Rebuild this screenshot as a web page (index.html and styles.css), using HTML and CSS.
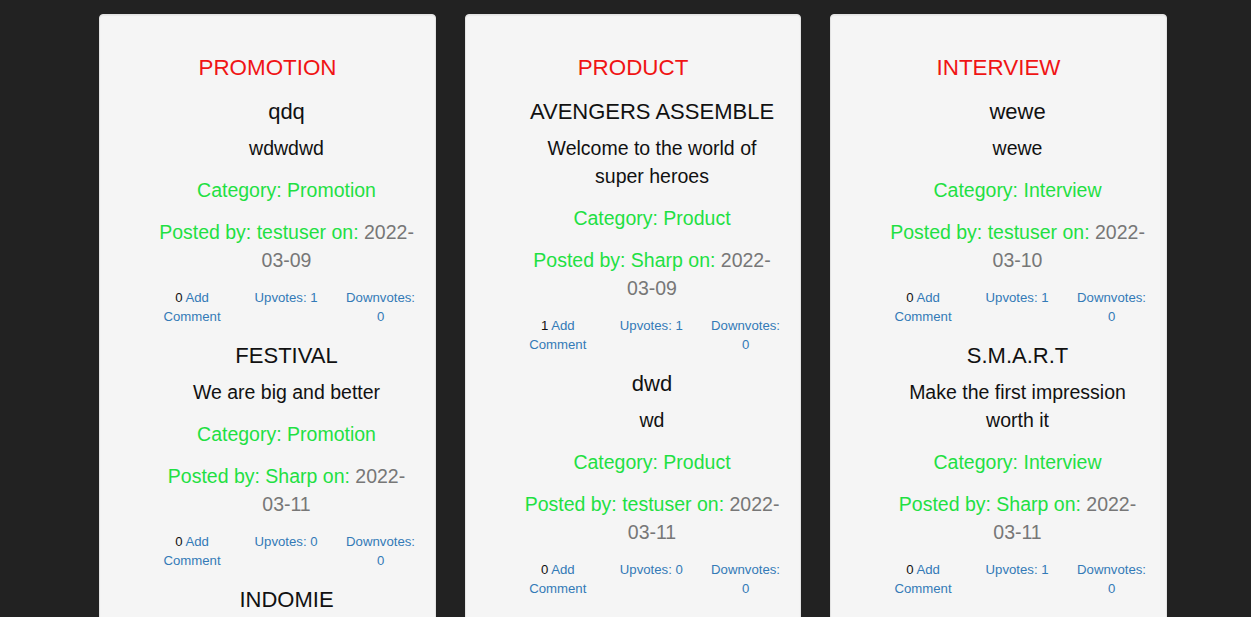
FILE: index.html
```html
<!DOCTYPE html>
<html lang="en">
<head>
<meta charset="utf-8">
<title>Posts</title>
<link rel="stylesheet" href="styles.css">
</head>
<body>
<main class="board">
  <section class="well">
    <h3 class="cat-head">PROMOTION</h3>
    <ul class="posts">
      <li class="post">
        <h4 class="post-title">qdq</h4>
        <p class="post-desc">wdwdwd</p>
        <p class="post-cat">Category: Promotion</p>
        <p class="post-meta">Posted by: testuser on: <span class="date">2022-03-09</span></p>
        <div class="stats">
          <div class="stat"><span class="count">0</span> <a href="#">Add Comment</a></div>
          <div class="stat"><a href="#">Upvotes: 1</a></div>
          <div class="stat"><a href="#">Downvotes: 0</a></div>
        </div>
      </li>
      <li class="post">
        <h4 class="post-title">FESTIVAL</h4>
        <p class="post-desc">We are big and better</p>
        <p class="post-cat">Category: Promotion</p>
        <p class="post-meta">Posted by: Sharp on: <span class="date">2022-03-11</span></p>
        <div class="stats">
          <div class="stat"><span class="count">0</span> <a href="#">Add Comment</a></div>
          <div class="stat"><a href="#">Upvotes: 0</a></div>
          <div class="stat"><a href="#">Downvotes: 0</a></div>
        </div>
      </li>
      <li class="post">
        <h4 class="post-title">INDOMIE</h4>
        <p class="post-desc">Tasty noodles</p>
        <p class="post-cat">Category: Promotion</p>
        <p class="post-meta">Posted by: Sharp on: <span class="date">2022-03-11</span></p>
      </li>
    </ul>
  </section>

  <section class="well">
    <h3 class="cat-head">PRODUCT</h3>
    <ul class="posts">
      <li class="post">
        <h4 class="post-title">AVENGERS ASSEMBLE</h4>
        <p class="post-desc">Welcome to the world of super heroes</p>
        <p class="post-cat">Category: Product</p>
        <p class="post-meta">Posted by: Sharp on: <span class="date">2022-03-09</span></p>
        <div class="stats">
          <div class="stat"><span class="count">1</span> <a href="#">Add Comment</a></div>
          <div class="stat"><a href="#">Upvotes: 1</a></div>
          <div class="stat"><a href="#">Downvotes: 0</a></div>
        </div>
      </li>
      <li class="post">
        <h4 class="post-title">dwd</h4>
        <p class="post-desc">wd</p>
        <p class="post-cat">Category: Product</p>
        <p class="post-meta">Posted by: testuser on: <span class="date">2022-03-11</span></p>
        <div class="stats">
          <div class="stat"><span class="count">0</span> <a href="#">Add Comment</a></div>
          <div class="stat"><a href="#">Upvotes: 0</a></div>
          <div class="stat"><a href="#">Downvotes: 0</a></div>
        </div>
      </li>
    </ul>
  </section>

  <section class="well">
    <h3 class="cat-head">INTERVIEW</h3>
    <ul class="posts">
      <li class="post">
        <h4 class="post-title">wewe</h4>
        <p class="post-desc">wewe</p>
        <p class="post-cat">Category: Interview</p>
        <p class="post-meta">Posted by: testuser on: <span class="date">2022-03-10</span></p>
        <div class="stats">
          <div class="stat"><span class="count">0</span> <a href="#">Add Comment</a></div>
          <div class="stat"><a href="#">Upvotes: 1</a></div>
          <div class="stat"><a href="#">Downvotes: 0</a></div>
        </div>
      </li>
      <li class="post">
        <h4 class="post-title">S.M.A.R.T</h4>
        <p class="post-desc">Make the first impression worth it</p>
        <p class="post-cat">Category: Interview</p>
        <p class="post-meta">Posted by: Sharp on: <span class="date">2022-03-11</span></p>
        <div class="stats">
          <div class="stat"><span class="count">0</span> <a href="#">Add Comment</a></div>
          <div class="stat"><a href="#">Upvotes: 1</a></div>
          <div class="stat"><a href="#">Downvotes: 0</a></div>
        </div>
      </li>
    </ul>
  </section>
</main>
</body>
</html>
```

FILE: styles.css
```css
html, body {
  margin: 0;
  padding: 0;
  overflow: hidden;
}

body {
  background: #222222;
  font-family: "Liberation Sans", Arial, Helvetica, sans-serif;
  font-size: 19.5px;
  line-height: 28px;
  color: #111111;
}

.board {
  display: grid;
  grid-template-columns: 337px 336px 337px;
  column-gap: 29px;
  align-items: start;
  padding: 14px 0 0 99px;
}

.well {
  background: #f5f5f5;
  border: 1px solid #e3e3e3;
  border-radius: 4px;
  box-shadow: inset 0 1px 1px rgba(0, 0, 0, 0.05);
  padding: 19px;
  min-height: 900px;
}

.cat-head {
  margin: 18px 0 12px;
  font-size: 22.4px;
  font-weight: normal;
  line-height: 32px;
  color: #f01414;
  text-align: center;
}

.posts {
  margin: 0;
  padding: 0 0 0 38px;
  list-style: none;
  text-align: center;
}

.post {
  padding-bottom: 14px;
}

.post-title {
  margin: 0 0 6px;
  font-size: 22px;
  font-weight: normal;
  line-height: 32px;
  color: #111111;
}

.post-desc {
  margin: 0 0 14px;
}

.post-cat,
.post-meta {
  margin: 0 0 14px;
  color: #1fe043;
}

.date {
  color: #777777;
}

.stats {
  display: grid;
  grid-template-columns: repeat(3, 1fr);
  margin: 0 -12px;
  font-size: 13.2px;
  line-height: 19px;
}

.stat {
  padding: 0 13px;
}

.count {
  color: #111111;
}

.stat a {
  color: #337ab7;
  text-decoration: none;
}
```
